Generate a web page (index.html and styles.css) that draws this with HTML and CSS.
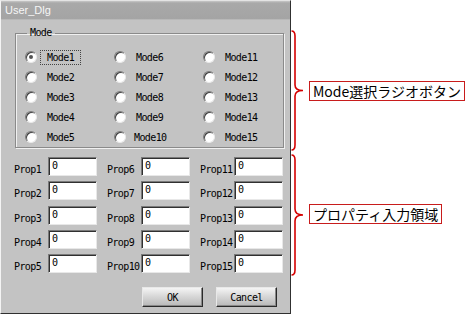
FILE: index.html
```html
<!DOCTYPE html>
<html lang="ja">
<head>
    <meta charset="UTF-8">
    <title>User_Dlg</title>
    <link rel="stylesheet" href="styles.css">
</head>
<body>
<div class="page">
    <div class="dialog">
        <div class="title-bar">User_Dlg</div>
        <div class="dlg-body">
            <fieldset class="mode-group">
                <legend>Mode</legend>
                <div class="radio-grid">
                    <label class="radio"><span class="dot checked"></span><span class="rlabel focus">Mode1</span></label>
                    <label class="radio"><span class="dot"></span><span class="rlabel">Mode6</span></label>
                    <label class="radio"><span class="dot"></span><span class="rlabel">Mode11</span></label>
                    <label class="radio"><span class="dot"></span><span class="rlabel">Mode2</span></label>
                    <label class="radio"><span class="dot"></span><span class="rlabel">Mode7</span></label>
                    <label class="radio"><span class="dot"></span><span class="rlabel">Mode12</span></label>
                    <label class="radio"><span class="dot"></span><span class="rlabel">Mode3</span></label>
                    <label class="radio"><span class="dot"></span><span class="rlabel">Mode8</span></label>
                    <label class="radio"><span class="dot"></span><span class="rlabel">Mode13</span></label>
                    <label class="radio"><span class="dot"></span><span class="rlabel">Mode4</span></label>
                    <label class="radio"><span class="dot"></span><span class="rlabel">Mode9</span></label>
                    <label class="radio"><span class="dot"></span><span class="rlabel">Mode14</span></label>
                    <label class="radio"><span class="dot"></span><span class="rlabel">Mode5</span></label>
                    <label class="radio"><span class="dot"></span><span class="rlabel wide">Mode10</span></label>
                    <label class="radio"><span class="dot"></span><span class="rlabel">Mode15</span></label>
                </div>
            </fieldset>

            <div class="prop-grid">
                <div class="prop"><span class="plabel">Prop1</span><span class="edit">0</span></div>
                <div class="prop"><span class="plabel">Prop6</span><span class="edit">0</span></div>
                <div class="prop"><span class="plabel">Prop11</span><span class="edit">0</span></div>
                <div class="prop"><span class="plabel">Prop2</span><span class="edit">0</span></div>
                <div class="prop"><span class="plabel">Prop7</span><span class="edit">0</span></div>
                <div class="prop"><span class="plabel">Prop12</span><span class="edit">0</span></div>
                <div class="prop"><span class="plabel">Prop3</span><span class="edit">0</span></div>
                <div class="prop"><span class="plabel">Prop8</span><span class="edit">0</span></div>
                <div class="prop"><span class="plabel">Prop13</span><span class="edit">0</span></div>
                <div class="prop"><span class="plabel">Prop4</span><span class="edit">0</span></div>
                <div class="prop"><span class="plabel">Prop9</span><span class="edit">0</span></div>
                <div class="prop"><span class="plabel">Prop14</span><span class="edit">0</span></div>
                <div class="prop"><span class="plabel">Prop5</span><span class="edit">0</span></div>
                <div class="prop"><span class="plabel">Prop10</span><span class="edit">0</span></div>
                <div class="prop"><span class="plabel">Prop15</span><span class="edit">0</span></div>
            </div>

            <div class="buttons">
                <button class="btn">OK</button>
                <button class="btn">Cancel</button>
            </div>
        </div>
    </div>

    <div class="notes">
        <div class="note note-mode">
            <svg class="brace" width="14" height="121" viewBox="0 0 14 121">
                <path d="M0.5,1 Q4,1 4,6 L4,55 Q4,60.5 12,60.5 Q4,60.5 4,66 L4,115 Q4,120 0.5,120" />
            </svg>
            <span class="note-label">Mode選択ラジオボタン</span>
        </div>
        <div class="note note-prop">
            <svg class="brace" width="14" height="122" viewBox="0 0 14 122">
                <path d="M0.5,1 Q4,1 4,6 L4,55 Q4,61 12,61 Q4,61 4,67 L4,116 Q4,121 0.5,121" />
            </svg>
            <span class="note-label">プロパティ入力領域</span>
        </div>
    </div>
</div>
</body>
</html>
```

FILE: styles.css
```css
body {
    margin: 0;
    background: #fff;
    font-family: "DejaVu Sans Mono", monospace;
}
.page {
    display: flex;
    align-items: flex-start;
}
.dialog {
    flex: none;
    width: 289px;
    height: 312px;
    background: #c3c3c3;
    border: 1px solid;
    border-color: #e4e4e4 #303030 #303030 #f4f4f4;
    display: flex;
    flex-direction: column;
}
.title-bar {
    height: 18px;
    line-height: 18px;
    padding-left: 4px;
    background: linear-gradient(to bottom, #c8c8c8 0, #a9a9a9 2px, #a4a4a4 100%);
    color: #f6f6f6;
    font-family: "Liberation Sans", Arial, sans-serif;
    font-size: 11px;
    border-bottom: 1px solid #b8b8b8;
}
.dlg-body {
    padding: 7px 12px 0 14px;
    flex: 1;
    display: flex;
    flex-direction: column;
}
.mode-group {
    margin: 0;
    padding: 0 0 0 9px;
    width: 248px;
    border: 1px solid #8a8a8a;
    box-shadow: inset 1px 1px 0 #f0f0f0, 1px 1px 0 #f0f0f0;
}
.mode-group legend {
    margin-left: 2px;
    padding: 0 3px;
    font-size: 10px;
    line-height: 12px;
    letter-spacing: -0.6px;
    color: #000;
}
.radio-grid {
    display: grid;
    grid-template-columns: 89px 89px 80px;
    grid-auto-rows: 20px;
    padding-top: 8px;
}
.radio {
    display: flex;
    align-items: center;
    font-size: 10px;
    letter-spacing: -0.6px;
}
.dot {
    width: 10px;
    height: 10px;
    border-radius: 50%;
    background: #fff;
    border: 1px solid;
    border-color: #7a7a7a #eaeaea #eaeaea #7a7a7a;
    box-shadow: inset 1px 1px 0 #404040;
    display: flex;
    align-items: center;
    justify-content: center;
}
.dot.checked::after {
    content: "";
    width: 4px;
    height: 4px;
    border-radius: 50%;
    background: #555;
}
.rlabel {
    margin-left: 3px;
    padding: 1px 6px 1px 6px;
    border: 1px solid transparent;
}
.rlabel.wide {
    margin-left: 1px;
}
.rlabel.focus {
    border: 1px dotted #444;
}
.prop-grid {
    display: grid;
    grid-template-columns: 93px 93px 93px;
    grid-auto-rows: 20px;
    row-gap: 4.25px;
    margin-top: 9px;
    margin-left: -1px;
}
.prop {
    display: flex;
    align-items: flex-end;
    font-size: 10px;
    letter-spacing: -0.6px;
}
.plabel {
    width: 34px;
    padding-bottom: 2px;
}
.edit {
    width: 44px;
    height: 16px;
    background: #fff;
    border: 1px solid;
    border-color: #7a7a7a #e8e8e8 #e8e8e8 #7a7a7a;
    box-shadow: inset 1px 1px 0 #303030;
    padding: 1px 0 0 3px;
    line-height: 13px;
    align-self: stretch;
}
.buttons {
    display: flex;
    justify-content: flex-end;
    gap: 13px;
    margin-top: 13px;
    padding-right: 1px;
}
.btn {
    width: 61px;
    height: 20px;
    padding: 0;
    font-family: "DejaVu Sans Mono", monospace;
    font-size: 10px;
    letter-spacing: -0.6px;
    color: #000;
    background: linear-gradient(to bottom, #f4f4f4, #d8d8d8 45%, #b8b8b8);
    border: 1px solid;
    border-color: #e8e8e8 #2a2a2a #2a2a2a #e8e8e8;
    box-shadow: inset -1px -1px 0 #888;
}
.notes {
    display: flex;
    flex-direction: column;
    gap: 3px;
    padding-top: 30px;
}
.note {
    display: flex;
    align-items: center;
}
.brace {
    display: block;
    flex: none;
    fill: none;
    stroke: #d40000;
    stroke-width: 1.6;
}
.note-label {
    margin-left: 4px;
    padding: 0 3px;
    border: 1px solid #c81c1c;
    font-family: "Noto Sans CJK JP", sans-serif;
    font-size: 14px;
    line-height: 18px;
    color: #000;
    white-space: nowrap;
}
.note-prop .note-label {
    margin-top: -2px;
}
```
